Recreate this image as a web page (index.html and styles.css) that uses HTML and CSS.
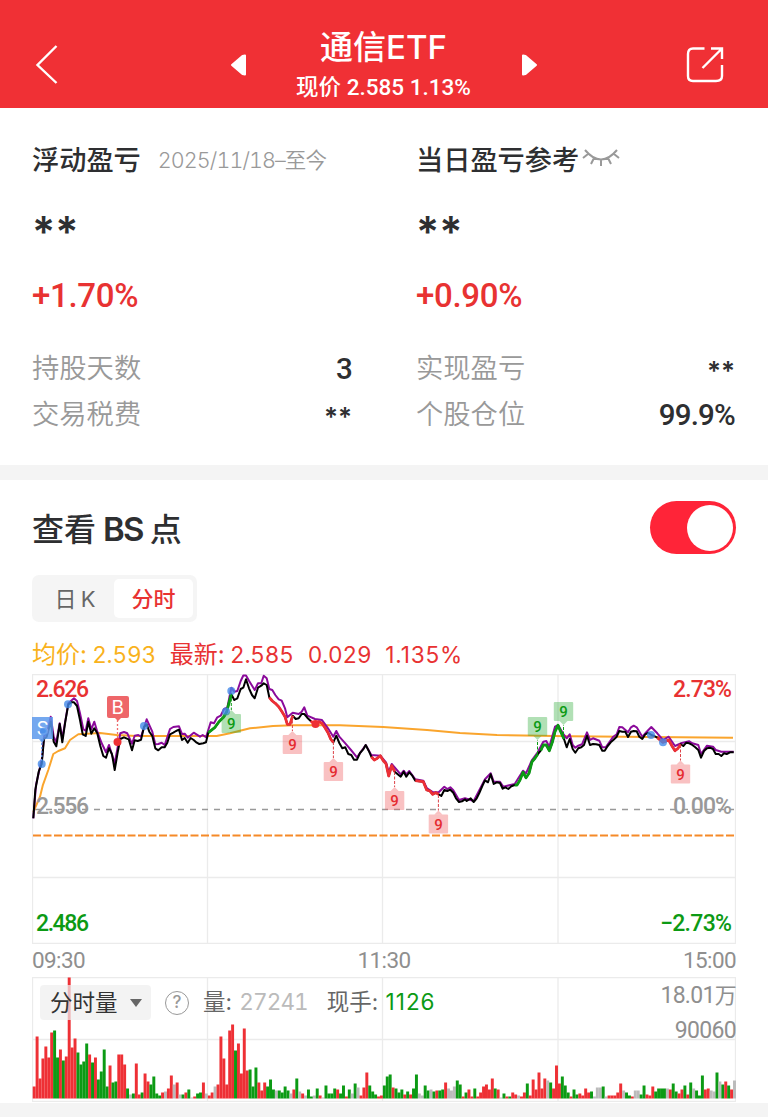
FILE: index.html
```html
<!DOCTYPE html>
<html lang="zh-CN">
<head>
  <meta charset="UTF-8" />
  <meta name="viewport" content="width=device-width, initial-scale=1.0"/>
  <title>通信ETF</title>
  <link rel="stylesheet" href="styles.css">
</head>
<body>
  <header class="header">
    <svg class="back" width="24" height="42" viewBox="0 0 24 42"><path d="M21.500 2 L2.500 21 L21.500 39"/></svg>
    <div class="switcher">
      <svg class="arrow" width="18" height="24" viewBox="0 0 18 24"><path d="M15 2.500 V21.500 L12.500 21 L2 12 L12.500 3 Z"/></svg>
      <div class="stock">
        <h1>通信ETF</h1>
        <p>现价 2.585 1.13%</p>
      </div>
      <svg class="arrow" width="18" height="24" viewBox="0 0 18 24"><path d="M3 2.500 V21.500 L5.500 21 L16 12 L5.500 3 Z"/></svg>
    </div>
    <svg class="share" width="38" height="38" viewBox="0 0 38 38">
      <path d="M18.500 2.500 H7 Q2 2.500 2 8 V30 Q2 35 7 35 H30 Q36 35 36 30 V19"/>
      <path d="M25 2.500 H36 V13 M36 2.500 L16.500 22"/>
    </svg>
  </header>

  <section class="summary">
    <div class="col">
      <div class="col-title">浮动盈亏<span class="date">2025/11/18–至今</span></div>
      <div class="masked">**</div>
      <div class="percent">+1.70%</div>
      <div class="row"><span>持股天数</span><b>3</b></div>
      <div class="row"><span>交易税费</span><b class="stars">**</b></div>
    </div>
    <div class="col">
      <div class="col-title">当日盈亏参考<svg class="eye" width="38" height="20" viewBox="0 0 38 20"><path d="M3 2 Q19 21 35 2 M6 6 L1 10 M32 6 L37 10 M12 10 L9 16 M26 10 L29 16 M19 12 V18"/></svg></div>
      <div class="masked">**</div>
      <div class="percent">+0.90%</div>
      <div class="row"><span>实现盈亏</span><b class="stars">**</b></div>
      <div class="row"><span>个股仓位</span><b>99.9%</b></div>
    </div>
  </section>

  <section class="bs">
    <div class="bs-head">
      <h2>查看<span>BS</span>点</h2>
      <div class="toggle"></div>
    </div>
    <div class="tabs">
      <div class="tab">日 K</div>
      <div class="tab active">分时</div>
    </div>
    <div class="quote">
      <span class="avg">均价: <i>2.593</i></span>
      <span>最新: <i>2.585</i></span>
      <span><i>0.029</i></span>
      <span><i class="rate">1.135%</i></span>
    </div>

    <svg class="chart" width="704" height="270" viewBox="32 674 704 270">
      <path class="grid" d="M32.500 674.500 H735.500 V943.500 H32.500 Z M32 741.500 H736 M32 877.500 H736 M207.500 674 V944 M382.500 674 V944 M558 674 V944"/>
      <path class="zero" d="M34 809.500 H734"/>
      <path class="cost" d="M33 835.500 H734"/>
      <polyline class="average" points="33.3,812 40,796.7 42.7,785.7 48.3,770 53.3,754 58.3,751 65,748.3 70,740 78.3,734.3 86.7,733.7 100,733 116.7,735 136.7,736 216.7,736 230,733.3 250,728.3 273,726 293,725.3 340,725.3 383,727 427,730 460,733 497,735 570,736.3 733,737.7"/>
      <polyline class="shadow" points="33.3,818.3 36,785 42,758.3 44,736.7 47.3,731.7 50.7,716.7 53.7,736.7 56.3,742.3 59.7,723.3 62.3,738.3 68.3,703.3 74,698.3 77,701 80,713.3 83.3,729.3 85.7,730.7 88.3,718.3 91.3,729.3 94.3,721.7 97.3,731.7 101.7,743.3 106,752.3 109,745 114.7,763.3 120.3,733.3 124,732 127.3,733.3 132,743.7 134.7,735.7 138.3,735 141,736.7 146.7,719.3 152.3,731.7 155.3,744.3 158.3,744 161.7,742.7 164.7,745 170,729 173.3,727 179,726.3 182,734 184.7,733.7 187.7,737.7 193.7,732.7 200,736.7 202.7,735 206,737.3 210.7,722.3 214,723.3 217.3,717.3 220.7,715.7 224,709 227.3,707.7 231.3,687.7 234.3,691.7 237.3,691 240.7,681 243.3,675.500 246,675.500 249,680.7 254.7,690 258,683.3 261.3,683.3 263.7,675.7 266.7,678.3 269.3,689 272.3,690 275.3,695 278.7,699.3 281.7,700.7 285,708.3 287.3,717.3 292.7,712.7 298.7,714 301.7,711.7 304.3,707.3 307.3,715.7 315,719 322,720 328,728.3 333.3,736.7 336.3,731 339.3,736.7 345.3,743.3 351,750 357,757.3 365.7,745 371.3,755 380.3,755.7 386,762.3 388.7,772 391.7,764 400.7,774.3 403.7,770.7 406.3,774.3 409.3,771 415.3,779.3 423.3,780.7 426.7,788 432.7,792 438.7,792.3 444.3,786.7 447.3,789 450.3,787.3 453.3,790.3 459,800 465,798.3 473.7,801 485,779.3 490.7,773.3 493.7,781.7 500,781.7 503.3,786.7 514.7,784 523,770.7 526,773.3 532,760 537.7,752.3 543.3,741.7 546.3,741 549.3,746.7 555,726.7 558,725 564,735 566.7,738.3 569.7,734.3 572.7,745 575.3,747.7 578.3,745.7 582,744.3 587,732.3 590,740 593,738.3 599.3,740.7 602.3,747.3 605.7,747.3 613.3,736.7 616.7,734.3 619.3,727 622.3,727.3 628,732.3 631,727.3 633.7,725.7 636.7,727.3 642.3,736.7 645.3,733.3 651.3,727 657.3,733.3 663,740 668.7,736.7 675,746 680.7,743.3 689.3,741.3 692.3,743.3 698.3,745 701,754 707,745.7 713,746.7 715.7,750 721.3,751.7 733.7,751.7"/>
      <polyline class="price" points="33.3,818.3 35.3,790 38.7,771.7 41.7,764 44,739 46.7,736.7 50.7,721.7 53.7,741.7 56.3,746.3 59.7,724 62.3,742.3 65.3,721.7 68.3,704.3 71.3,702.3 74,702.3 77,706 80,720 82.7,734.3 85.7,736 88.3,721.7 91.3,733.7 94.3,728.3 97.3,733.3 100.3,746 103.3,756 106,757.7 109,748.3 112,754.3 114.7,770 117.7,752.3 120.3,739 124,737.3 128.7,739.3 132,750.3 134.7,740.3 137.7,741 141,739.7 144,727 146.7,724.3 149.3,731.7 152.3,736 155.3,748.3 158.3,750.3 161.7,747.3 164.7,747.3 167.3,742.7 170,734.3 173.3,732.7 176,731 179,729.7 182,740 184.7,738 187.7,742.7 190.7,738 193.7,740 196.7,742.7 199.3,744 203.3,743.3 206,742.3 208.3,732.7 215,727.3 219,721.7 224,716.7 226.7,711.7 231.3,694.3 234.3,700 237.3,698.3 240.7,689 243.3,687.7 246,679.3 249,688.3 252,695 254.7,698.3 258,687.7 261.3,685.7 263.7,683.3 266.7,685 269.3,697.3 272.3,701 275.3,703.3 278.7,706.7 282,711.7 285,716.7 287.3,724.3 290,724.3 292.7,715.7 295.7,719 298.7,718.3 301.7,714 304.3,714 307.3,717.7 310.7,721 315,724.3 319,721.7 322,723.3 325,727.7 328,732.7 330.7,739 333.3,742.3 336.3,735.7 339.3,743 342.3,748.3 345.3,747.3 348.3,754 351.3,755 354,759.7 357,759.7 360,753 363,749.7 365.7,745 368.7,750.7 371.3,756.7 374.3,760 377.3,758.3 380.3,755.7 383.3,760.7 386,763.7 388.7,776 391.7,765.7 394.7,771.7 400.7,776.7 403.7,771.7 406.3,776.7 409.3,772.3 412.3,775.7 415.3,780.7 423.3,781.7 426.7,790 430,791 432.7,794.3 435.7,792.7 438.7,794.3 441.3,796 444.3,790 447.3,791 450.3,789.7 453.3,792.7 456,798.3 459,802 462,801.3 465,799.3 466.7,801 470.7,798.3 473.7,802 476.7,798.3 479.3,793 482.3,786 485,780.3 488,782.3 490.7,774.3 493.7,784 496.7,782.3 500,783 502.7,788.7 505.3,787.3 508.3,789 511.3,786.3 514.7,785 517,785 520,780 523,772.3 526,777.7 529,773.3 532,761.7 535,758.3 537.7,754.3 540.7,750.7 543.3,745 546.3,745 549.3,750.7 552.3,742.3 555,731.7 558,725.3 560.7,731.7 564,739 566.7,747.3 569.7,739 572.7,749 575.3,752.7 578.3,748.3 581.3,747.3 584,745 587,735.7 590,745 593,744 596,744.3 599.3,745 602.3,750.7 604.7,750.7 607.7,746 610.7,742.3 613.3,740 616.7,736.7 619.3,731 622.3,731.7 625.3,731.7 628,737 631,731.7 633.7,731 636.7,731.3 639.3,736.7 642.3,739 645.3,734.3 648.3,732.7 651.3,735 654.3,736 657.3,737.7 663,742.3 668.7,740 672,746 675,750.7 678,748.3 680.7,744.3 683.3,746 686.3,742.7 689.3,743.3 692.3,745 695.3,747.3 698.3,750 701,757.7 704,751 707,748.3 710,747.7 713,749 715.7,754 718.7,754 721.3,756 724,753.3 726.7,754 730,752.3 733.7,752.3"/>
      <g class="rise">
        <polyline points="208.3,732.7 215,727.3 219,721.7 224,716.7 226.7,711.7 231.3,694.3"/>
        <polyline points="514.7,785 517,785 520,780 523,772.3 526,777.7 529,773.3 532,761.7 535,758.3 537.7,754.3"/>
        <polyline points="540.7,750.7 543.3,745 546.3,745 549.3,750.7 552.3,742.3 555,731.7 558,725.3 560.7,731.7 564,739"/>
      </g>
      <g class="fall">
        <polyline points="269.3,697.3 272.3,701 275.3,703.3 278.7,706.7 282,711.7 285,716.7 287.3,724.3 290,724.3 292.7,715.7"/>
        <polyline points="310.7,721 315,724.3 319,721.7 322,723.3 325,727.7 328,732.7 330.7,739 333.3,742.3"/>
        <polyline points="371.3,756.7 374.3,760 377.3,758.3 380.3,755.7 383.3,760.7 386,763.7 388.7,776 391.7,765.7 394.7,771.7"/>
        <polyline points="415.3,780.7 423.3,781.7 426.7,790 430,791 432.7,794.3 435.7,792.7 438.7,794.3"/>
        <polyline points="657.3,737.7 663,742.3 668.7,740 672,746 675,750.7 678,748.3 680.7,744.3"/>
      </g>

      <!-- trades -->
      <path class="lead-s" d="M41.700 739 V762"/>
      <path class="lead-b" d="M117.500 720 V741"/>
      <path class="badge-s" d="M32 717 H53 V739 H45 L42 743 L39 739 H32 Z"/>
      <text class="bs-mark" x="42.500" y="735">S</text>
      <path class="badge-b" d="M109 696 H127 Q129 696 129 698 V716 Q129 718 127 718 H121 L118 721 L115 718 H109 Q107 718 107 716 V698 Q107 696 109 696 Z"/>
      <text class="bs-mark" x="117.700" y="714">B</text>
      <g class="sell">
        <circle cx="41.700" cy="764" r="4"/><circle cx="44" cy="731.500" r="4"/><circle cx="68" cy="704.300" r="4"/><circle cx="144" cy="726" r="4"/>
        <circle cx="226" cy="711.500" r="4"/><circle cx="231.300" cy="691" r="4"/><circle cx="651" cy="735" r="4"/><circle cx="663" cy="742.300" r="4"/>
      </g>
      <g class="buy"><circle cx="117.500" cy="742" r="4"/><circle cx="315.500" cy="724" r="4"/></g>
      <g id="nines"></g>

      <text class="label up" x="36" y="696.500" textLength="53">2.626</text>
      <text class="label up" x="673" y="696.500" textLength="59">2.73%</text>
      <text class="label flat" x="36" y="813.500" textLength="53">2.556</text>
      <text class="label flat" x="673" y="813.500" textLength="59">0.00%</text>
      <text class="label down" x="36" y="930.500" textLength="53">2.486</text>
      <text class="label down" x="660" y="930.500" textLength="72">−2.73%</text>
    </svg>

    <div class="times"><span>09:30</span><span>11:30</span><span>15:00</span></div>

    <div class="volume">
      <svg width="704" height="125" viewBox="32 977 704 125">
        <path class="grid" d="M32.500 977.500 H735.500 V1101.500 H32.500 Z M32 1039.500 H736 M207.500 977 V1102 M382.500 977 V1102 M558 977 V1102"/>
        <g id="bars"></g>
      </svg>
      <div class="volume-bar">
        <div class="select">分时量<svg width="14" height="10" viewBox="0 0 14 10"><path d="M1 1 H13 L7 9 Z"/></svg></div>
        <div class="help">?</div>
        <span>量: <i class="faded">27241</i></span>
        <span class="hand">现手: <i class="green">1126</i></span>
      </div>
      <div class="scale"><span>18.01<em>万</em></span><span>90060</span></div>
    </div>
  </section>
  <script src="script.js"></script>
</body>
</html>
```
FILE: styles.css
```css
* {
  margin: 0;
  padding: 0;
  box-sizing: border-box;
}

body {
  background: #f4f4f4;
  font-family: Roboto, 'Noto Sans CJK SC', sans-serif;
  color: #2e2f31;
  min-height: 1117px;
  overflow: hidden;
}

svg {
  display: block;
}

i,
em {
  font-style: normal;
}

.header {
  height: 108px;
  background: #f03035;
  color: white;
  display: flex;
  justify-content: space-between;
  align-items: flex-start;
  padding: 0 44px 0 35px;
}

.back,
.share {
  fill: none;
  stroke: white;
  stroke-width: 2.4;
  margin-top: 44px;
}

.share {
  margin-top: 46px;
}

.switcher {
  display: flex;
  width: 308px;
  justify-content: space-between;
  margin-left: 22px;
}

.arrow {
  fill: white;
  stroke: white;
  stroke-width: 2;
  stroke-linejoin: round;
  margin-top: 53px;
}

.stock {
  text-align: center;
  white-space: nowrap;
  padding-top: 28px;
}

.stock h1 {
  font-family: Inter, 'Noto Sans CJK SC', sans-serif;
  font-size: 33px;
  font-weight: 500;
  line-height: 38px;
}

.stock p {
  font-size: 22.5px;
  font-weight: 500;
  line-height: 40px;
  padding-top: 1px;
}

.summary {
  background: white;
  display: grid;
  grid-template-columns: 320px 319px;
  column-gap: 64px;
  padding: 24px 0 27px 32px;
}

.col-title {
  display: flex;
  align-items: center;
  height: 52px;
  font-size: 27.2px;
  font-weight: 500;
  white-space: nowrap;
}

.date {
  font-family: Inter, 'Noto Sans CJK SC', sans-serif;
  font-size: 21.5px;
  font-weight: 350;
  font-feature-settings: 'tnum';
  letter-spacing: -0.9px;
  color: #999;
  margin-left: 17px;
}

.eye {
  fill: none;
  stroke: #999;
  stroke-width: 2;
  margin-left: 3px;
}

.masked {
  font-family: Inter, sans-serif;
  font-size: 43px;
  font-weight: 600;
  height: 78px;
  line-height: 95px;
}

.percent {
  font-size: 33px;
  font-weight: 500;
  letter-spacing: -0.3px;
  color: #e83232;
  height: 84px;
  line-height: 67px;
}

.row {
  display: flex;
  justify-content: space-between;
  align-items: center;
  height: 46px;
}

.row span {
  font-size: 27.3px;
  font-weight: 350;
  color: #999;
  line-height: 42px;
}

.row b {
  font-size: 29.5px;
  font-weight: 500;
  letter-spacing: -0.8px;
}

.row .stars {
  font-family: Inter, sans-serif;
  font-size: 26px;
  font-weight: 600;
  letter-spacing: 0;
  padding-top: 2px;
}

.bs {
  background: white;
  margin-top: 15px;
  height: 623px;
  padding: 0 32px;
}

.bs-head {
  display: flex;
  justify-content: space-between;
  align-items: center;
  height: 95px;
}

.bs-head h2 {
  font-size: 32px;
  font-weight: 500;
  line-height: 44px;
  padding-top: 3px;
}

.bs-head h2 span {
  font-family: Inter, sans-serif;
  font-size: 33px;
  font-weight: 600;
  margin: 0 7px 0 7px;
  letter-spacing: -1.8px;
}

.toggle {
  width: 86px;
  height: 53px;
  border-radius: 27px;
  background: #ff2438;
  display: flex;
  align-items: center;
  justify-content: flex-end;
  padding-right: 3px;
}

.toggle::after {
  content: '';
  width: 46px;
  height: 46px;
  border-radius: 50%;
  background: white;
}

.tabs {
  display: flex;
  width: 165px;
  height: 47px;
  padding: 4px;
  border-radius: 7px;
  background: #f5f5f5;
}

.tab {
  width: 78px;
  border-radius: 5px;
  font-family: Inter, 'Noto Sans CJK SC', sans-serif;
  font-size: 22px;
  line-height: 40px;
  text-align: center;
  color: #666;
  word-spacing: -2px;
}

.tab.active {
  width: 79px;
  background: white;
  color: #e83232;
  font-weight: 500;
}

.quote {
  display: flex;
  align-items: baseline;
  gap: 14px;
  height: 38px;
  line-height: 38px;
  margin-top: 14px;
  font-family: Inter, 'Noto Sans CJK SC', sans-serif;
  font-size: 24px;
  word-spacing: -1.5px;
  color: #e83232;
  white-space: nowrap;
}

.quote i {
  font-size: 22.6px;
  font-feature-settings: 'tnum';
  letter-spacing: -0.2px;
}

.quote .rate {
  font-feature-settings: normal;
  letter-spacing: 0.8px;
}

.quote .avg {
  color: #f9b21c;
}

.grid {
  fill: none;
  stroke: #ebebeb;
  stroke-width: 1.3;
}

.chart polyline {
  fill: none;
  stroke-linejoin: round;
  stroke-width: 2;
}

.zero {
  stroke: #999;
  stroke-width: 1.3;
  stroke-dasharray: 6 6;
}

.cost {
  stroke: #f58a28;
  stroke-width: 2;
  stroke-dasharray: 8 2.5;
}

.chart .average {
  stroke: #faa52d;
}

.chart .shadow {
  stroke: #8b0a9b;
}

.chart .price {
  stroke: #000;
}

.chart .rise polyline {
  stroke: #0c9a14;
  stroke-width: 2.8;
}

.chart .fall polyline {
  stroke: #ed2f36;
  stroke-width: 2.8;
}

.lead-s,
.lead-b {
  stroke: #6ba1ee;
  stroke-width: 1.3;
  stroke-dasharray: 2 2;
}

.lead-b {
  stroke: #ed6a6c;
}

.badge-s {
  fill: #5c99ec;
  fill-opacity: 0.85;
}

.badge-b {
  fill: #ee6669;
}

.bs-mark {
  font: 19px Inter, sans-serif;
  fill: white;
  text-anchor: middle;
}

.sell {
  fill: #4389e8;
  fill-opacity: 0.8;
}

.buy {
  fill: #ee3035;
}

.nine text {
  font: 500 15px Roboto, sans-serif;
  text-anchor: middle;
}

.nine .lead {
  stroke-width: 1;
  stroke-dasharray: 3 1.5;
}

.nine.red .box {
  fill: rgba(239, 82, 87, 0.36);
}

.nine.red text {
  fill: #e52b30;
}

.nine.red .lead {
  stroke: #dc4248;
}

.nine.green .box {
  fill: rgba(40, 170, 50, 0.36);
}

.nine.green text {
  fill: #0c9a14;
}

.nine.green .lead {
  stroke: #0c9a14;
}

.label {
  font: 500 23px Roboto, sans-serif;
}

.up {
  fill: #e83232;
}

.flat {
  fill: #999;
}

.down {
  fill: #0c9a14;
}

.times {
  display: flex;
  justify-content: space-between;
  height: 33px;
  line-height: 33px;
  font-size: 22.5px;
  color: #8f8f8f;
  letter-spacing: -0.6px;
}

.volume {
  position: relative;
  height: 125px;
}

.volume-bar {
  position: absolute;
  left: 8px;
  top: 8px;
  display: flex;
  align-items: center;
  height: 35px;
  font-family: Inter, 'Noto Sans CJK SC', sans-serif;
  font-size: 22.5px;
  line-height: 30px;
  color: #666;
  white-space: nowrap;
}

.volume-bar span {
  padding-bottom: 1px;
}

.volume-bar i {
  font-feature-settings: 'tnum';
  letter-spacing: -0.9px;
  margin-left: 1px;
}

.select {
  display: flex;
  align-items: center;
  gap: 11px;
  width: 111px;
  height: 35px;
  padding-left: 10px;
  border-radius: 4px;
  background: rgba(238, 238, 238, 0.72);
  color: #333;
}

.select svg {
  fill: #666;
}

.help {
  width: 24px;
  height: 24px;
  border: 1.8px solid #999;
  border-radius: 50%;
  margin: 0 14px;
  font-size: 17px;
  font-weight: 500;
  line-height: 21px;
  text-align: center;
  color: #999;
}

.hand {
  margin-left: 19px;
}

.faded {
  color: #bbb;
}

.volume-bar .green {
  color: #0c9a14;
  font-feature-settings: normal;
  letter-spacing: 1px;
}

.scale {
  position: absolute;
  right: 0;
  top: 1px;
  display: flex;
  flex-direction: column;
  align-items: flex-end;
  font-size: 23px;
  line-height: 35px;
  letter-spacing: -0.7px;
  color: #8f8f8f;
}

.scale em {
  font-size: 22px;
}

.bar-r {
  fill: #ee3035;
}

.bar-g {
  fill: #0c9a14;
}

.bar-n {
  fill: #bbb;
}
```
FILE: script.js
```js
// one entry per minute: colour + height
const volume = `r12 r62 r20 r40 r52 r41 r66 g68 g41 r49 g38 r42 r121 r51 r60 g46 g34 g37 g55 r44
g36 r41 g19 g27 g49 g12 r33 g16 g17 r44 r44 r34 g10 n4 g5 r35 r4 g6 r25 r17
g14 g22 g5 g3 r6 n7 r10 r23 n14 r16 n4 g4 r6 g9 n1 r2 g5 g6 r16 n5
r3 r6 n12 r14 r62 r40 r14 r68 r74 g48 r55 r25 r70 r28 g29 g12 g31 r16 r8 r16
g12 g19 g9 n8 g8 g6 g12 g8 n5 r9 g20 n7 r5 n3 g9 g2 n3 g10 r3 n1
g13 g5 g5 g10 r9 g5 g13 r2 g9 n5 g15 n11 r3 r11 r26 g13 g7 g4 r2 r3
g13 g22 g24 r11 g10 g6 g9 r4 g7 r4 g10 g24 n5 n3 g13 g8 n9 g7 r8 g8
g9 r16 n10 n8 n12 g18 g14 r2 g6 r9 r2 g10 r2 r6 r12 r14 r9 r20 g10 r9
n1 g5 r2 g2 r6 r4 n3 r2 r6 g15 r3 r19 r9 r26 r10 r20 n18 g16 r10 r33
r15 g22 g13 g6 r2 g9 g4 r5 r3 r10 r6 g7 n2 n11 n11 g12 n2 r3 r3 r3
r6 r15 n8 g6 g3 r2 n8 n8 g4 g13 r4 r3 r12 g7 g10 g10 g10 n10 r9 g15
g7 r5 r9 g13 r4 g16 n10 g8 g3 g23 r9 r10 n8 n7 g26 n17 g14 r17 g13 r9 n18`.split(/\s+/);

document.getElementById("bars").innerHTML = volume.map((v, i) => {
  const h = Number(v.slice(1));
  return `<rect class="bar-${v[0]}" x="${(32.7 + i * 2.918).toFixed(2)}" y="${1098.5 - h}" width="2.95" height="${h}"/>`;
}).join("");

// x, top of the box, y on the price line, colour
const nines = [
  [231.3, 714, 694, "green"],
  [292.4, 735, 716, "red"],
  [333.4, 762, 742, "red"],
  [394.6, 791, 772, "red"],
  [438.4, 814.5, 795, "red"],
  [537.5, 717, 754, "green"],
  [563.5, 702, 739, "green"],
  [680.5, 764.5, 745, "red"]
];

document.getElementById("nines").innerHTML = nines.map(([x, top, y, color]) => {
  const above = y > top;
  const edge = above ? top + 19 : top;
  const tip = above ? edge + 4 : edge - 4;
  return `<g class="nine ${color}">
    <path class="lead" d="M${x} ${y} V${tip}"/>
    <rect class="box" x="${x - 9.7}" y="${top}" width="19.4" height="19" rx="1"/>
    <path class="box" d="M${x - 4} ${edge} L${x} ${tip} L${x + 4} ${edge} Z"/>
    <text x="${x}" y="${top + 15}">9</text>
  </g>`;
}).join("");
```
